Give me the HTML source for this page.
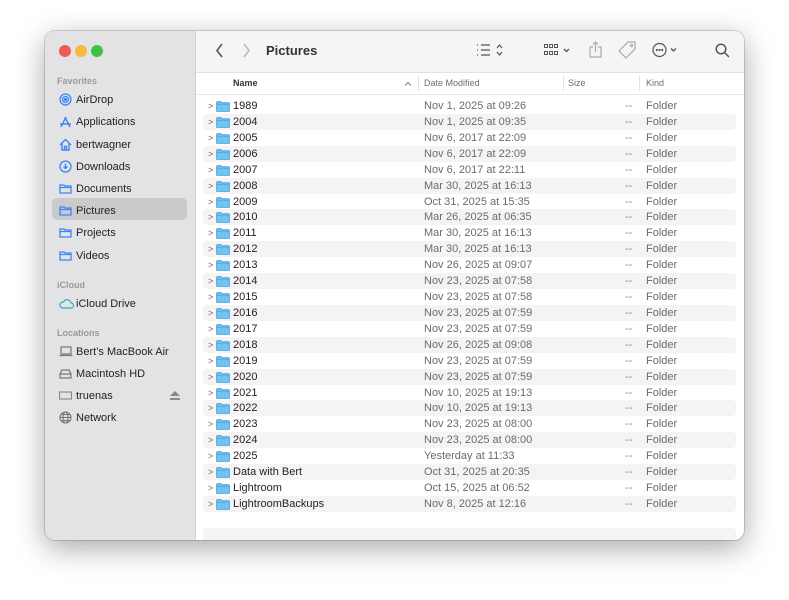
<!DOCTYPE html><html><head><style>
body{margin:0;width:789px;height:600px;background:#fff;font-family:"Liberation Sans",sans-serif;position:relative;overflow:hidden}
.win{position:absolute;left:45px;top:31px;width:699px;height:509px;border-radius:10px;background:#fff;box-shadow:0 8px 30px rgba(0,0,0,.35),0 0 0 1px rgba(0,0,0,.15);overflow:hidden}
.side{position:absolute;left:0;top:0;width:150px;height:509px;background:#e3e3e5;border-right:1px solid #d0d0d0}
.tl{position:absolute;top:14px;width:12px;height:12px;border-radius:50%}
.sec{position:absolute;left:12px;font-size:9px;color:#9a9a9c;font-weight:bold}
.it{position:absolute;left:31px;font-size:11px;color:#222;line-height:14px}
.ic{position:absolute;left:14px;width:13px;height:13px}
.sel{position:absolute;left:7px;top:167px;width:135px;height:22px;background:#cacacc;border-radius:5px}
.tb{position:absolute;left:151px;top:0;right:0;height:41px;background:#f5f5f6;border-bottom:1px solid #e2e2e2}
.hdr{position:absolute;left:151px;top:42px;right:0;height:21px;border-bottom:1px solid #e6e6e6;font-size:9px;color:#6e6e6e}
.hdr span{position:absolute;top:5px}
.sep{position:absolute;top:3px;width:1px;height:15px;background:#e2e2e2}
.row{position:absolute;left:158px;width:533px;height:16px;border-radius:4px;font-size:11px;color:#222}
.row.s{background:#f4f4f5}
.row .c{position:absolute;left:5px;top:3px;font-size:9px;color:#666}
.row .f{position:absolute;left:13px;top:3px;width:14px;height:11px}
.row .n{position:absolute;left:30px;top:2px}
.row .d{position:absolute;left:221px;top:2px;color:#6b6b6b}
.row .z{position:absolute;left:422px;top:2px;color:#8a8a8a}
.row .k{position:absolute;left:443px;top:2px;color:#6b6b6b}
</style></head><body>
<div class="win">
<div class="side">
<div class="tl" style="left:14px;background:#ee5b55"></div>
<div class="tl" style="left:30px;background:#f6bb3d"></div>
<div class="tl" style="left:46px;background:#3ec244"></div>
<div class="sec" style="top:45px">Favorites</div>
<div class="sel"></div>
<svg class="ic" style="top:62px" viewBox="0 0 13 13" fill="none" stroke="#3a87f5" stroke-width="1.3"><circle cx="6.5" cy="6.5" r="5.5"/><circle cx="6.5" cy="6.5" r="3"/><circle cx="6.5" cy="6.5" r="1" fill="#3a87f5"/></svg><div class="it" style="top:62px">AirDrop</div>
<svg class="ic" style="top:84px" viewBox="0 0 13 13" fill="none" stroke="#3a87f5" stroke-width="1.4"><path d="M2 12L7 2M11 12L6 2M1 9h11"/></svg><div class="it" style="top:84px">Applications</div>
<svg class="ic" style="top:107px" viewBox="0 0 13 13" fill="none" stroke="#3a87f5" stroke-width="1.4"><path d="M1 7L6.5 1.5 12 7M3 5.5V12h7V5.5M5.5 12V8.5h2V12"/></svg><div class="it" style="top:107px">bertwagner</div>
<svg class="ic" style="top:129px" viewBox="0 0 13 13" fill="none" stroke="#3a87f5" stroke-width="1.3"><circle cx="6.5" cy="6.5" r="5.5"/><path d="M6.5 3.5v5M4.5 6.5l2 2 2-2"/></svg><div class="it" style="top:129px">Downloads</div>
<svg class="ic" style="top:151px" viewBox="0 0 13 13" fill="none" stroke="#3a87f5" stroke-width="1.3"><path d="M1 3h4l1 1h6v7H1zM1 5.5h11"/></svg><div class="it" style="top:151px">Documents</div>
<svg class="ic" style="top:173px" viewBox="0 0 13 13" fill="none" stroke="#3a87f5" stroke-width="1.3"><path d="M1 3h4l1 1h6v7H1zM1 5.5h11"/></svg><div class="it" style="top:173px">Pictures</div>
<svg class="ic" style="top:195px" viewBox="0 0 13 13" fill="none" stroke="#3a87f5" stroke-width="1.3"><path d="M1 3h4l1 1h6v7H1zM1 5.5h11"/></svg><div class="it" style="top:195px">Projects</div>
<svg class="ic" style="top:218px" viewBox="0 0 13 13" fill="none" stroke="#3a87f5" stroke-width="1.3"><path d="M1 3h4l1 1h6v7H1zM1 5.5h11"/></svg><div class="it" style="top:218px">Videos</div>
<div class="sec" style="top:249px">iCloud</div>
<svg class="ic" style="top:266px;width:15px" viewBox="0 0 15 13" fill="none" stroke="#3aa9c9" stroke-width="1.2"><path d="M3.5 11h8.5a2.5 2.5 0 0 0 0-5 4 4 0 0 0-7.5-1A3 3 0 0 0 3.5 11z"/></svg><div class="it" style="top:266px">iCloud Drive</div>
<div class="sec" style="top:297px">Locations</div>
<svg class="ic" style="top:314px;width:14px" viewBox="0 0 14 13" fill="none" stroke="#777" stroke-width="1.2"><path d="M2 2h10v7H2zM0.5 10.5h13"/></svg><div class="it" style="top:314px">Bert’s MacBook Air</div>
<svg class="ic" style="top:336px" viewBox="0 0 13 13" fill="none" stroke="#777" stroke-width="1.2"><path d="M1 7l2-4h7l2 4v4H1zM1 7h11"/></svg><div class="it" style="top:336px">Macintosh HD</div>
<svg class="ic" style="top:358px" viewBox="0 0 13 13" fill="none" stroke="#888" stroke-width="1.1"><rect x="0.5" y="3" width="12" height="7"/></svg><div class="it" style="top:358px">truenas</div>
<svg style="position:absolute;left:125px;top:360px" width="10" height="9" viewBox="0 0 10 9"><path d="M5 0L10 5H0z M0 7h10v2H0z" fill="#888"/></svg>
<svg class="ic" style="top:380px" viewBox="0 0 13 13" fill="none" stroke="#777" stroke-width="1.1"><circle cx="6.5" cy="6.5" r="5.5"/><ellipse cx="6.5" cy="6.5" rx="2.5" ry="5.5"/><path d="M1 6.5h11M2 3.5h9M2 9.5h9"/></svg><div class="it" style="top:380px">Network</div>
</div>
<div class="tb">
<svg style="position:absolute;left:19px;top:12px" width="10" height="15"><path d="M7 1L2 7.5 7 14" fill="none" stroke="#555" stroke-width="1.6"/></svg>
<svg style="position:absolute;left:46px;top:12px" width="10" height="15"><path d="M2 1l5 6.5L2 14" fill="none" stroke="#bbb" stroke-width="1.6"/></svg>
<div style="position:absolute;left:70px;top:12px;font-size:13px;font-weight:bold;color:#333">Pictures</div>
<svg style="position:absolute;left:281px;top:12px" width="30" height="14" fill="none" stroke="#555" stroke-width="1.2"><path d="M0 2h1M0 7h1M0 12h1M4 2h9M4 7h9M4 12h9M20 5l2.5-3 2.5 3M20 9l2.5 3 2.5-3"/></svg>
<svg style="position:absolute;left:348px;top:13px" width="30" height="12" fill="none" stroke="#555" stroke-width="1"><rect x="0.5" y="0.5" width="3" height="3"/><rect x="5.5" y="0.5" width="3" height="3"/><rect x="10.5" y="0.5" width="3" height="3"/><rect x="0.5" y="7.5" width="3" height="3"/><rect x="5.5" y="7.5" width="3" height="3"/><rect x="10.5" y="7.5" width="3" height="3"/><path d="M20 5l2.5 2.5L25 5" stroke-width="1.3"/></svg>
<svg style="position:absolute;left:393px;top:10px" width="13" height="17" fill="none" stroke="#aaa" stroke-width="1.2"><path d="M4 6H1v10h11V6H9M6.5 11V1M4 3.5L6.5 1 9 3.5"/></svg>
<svg style="position:absolute;left:422px;top:10px" width="18" height="18" fill="none" stroke="#aaa" stroke-width="1.2"><path d="M10 1h7v7l-9 9-7-7z"/><circle cx="13.5" cy="4.5" r="1"/></svg>
<svg style="position:absolute;left:456px;top:11px" width="30" height="16" fill="none" stroke="#555" stroke-width="1.2"><circle cx="7.5" cy="8" r="6.5"/><circle cx="4.8" cy="8" r=".5" fill="#555"/><circle cx="7.5" cy="8" r=".5" fill="#555"/><circle cx="10.2" cy="8" r=".5" fill="#555"/><path d="M19 6.5l2.5 2.5L24 6.5" stroke-width="1.3"/></svg>
<svg style="position:absolute;left:519px;top:12px" width="15" height="15" fill="none" stroke="#555" stroke-width="1.5"><circle cx="6" cy="6" r="4.8"/><path d="M9.5 9.5L14 14"/></svg>
</div>
<div class="hdr">
<span style="left:37px;font-weight:bold;color:#333">Name</span>
<svg style="position:absolute;left:208px;top:8px" width="8" height="5"><path d="M1 4.5L4 1.5 7 4.5" fill="none" stroke="#888" stroke-width="1.1"/></svg>
<div class="sep" style="left:222px"></div><span style="left:228px">Date Modified</span>
<div class="sep" style="left:367px"></div><span style="left:372px">Size</span>
<div class="sep" style="left:443px"></div><span style="left:450px">Kind</span>
</div>
<div id="rows"></div>
<div style="position:absolute;left:158px;top:497px;width:533px;height:20px;background:#f4f4f5;border-radius:4px"></div>
</div>
<script>
var d=[["1989","Nov 1, 2025 at 09:26"],["2004","Nov 1, 2025 at 09:35"],["2005","Nov 6, 2017 at 22:09"],["2006","Nov 6, 2017 at 22:09"],["2007","Nov 6, 2017 at 22:11"],["2008","Mar 30, 2025 at 16:13"],["2009","Oct 31, 2025 at 15:35"],["2010","Mar 26, 2025 at 06:35"],["2011","Mar 30, 2025 at 16:13"],["2012","Mar 30, 2025 at 16:13"],["2013","Nov 26, 2025 at 09:07"],["2014","Nov 23, 2025 at 07:58"],["2015","Nov 23, 2025 at 07:58"],["2016","Nov 23, 2025 at 07:59"],["2017","Nov 23, 2025 at 07:59"],["2018","Nov 26, 2025 at 09:08"],["2019","Nov 23, 2025 at 07:59"],["2020","Nov 23, 2025 at 07:59"],["2021","Nov 10, 2025 at 19:13"],["2022","Nov 10, 2025 at 19:13"],["2023","Nov 23, 2025 at 08:00"],["2024","Nov 23, 2025 at 08:00"],["2025","Yesterday at 11:33"],["Data with Bert","Oct 31, 2025 at 20:35"],["Lightroom","Oct 15, 2025 at 06:52"],["LightroomBackups","Nov 8, 2025 at 12:16"]];
var h="";
var fo='<svg class="f" viewBox="0 0 14 11"><path d="M0.5 1.5Q0.5 0.5 1.5 0.5H5l1 1.2h6.5q1 0 1 1V10q0 .5-.5.5H1q-.5 0-.5-.5z" fill="#72c3f0" stroke="#4aa3da" stroke-width=".8"/><path d="M0.5 3.2h13" stroke="#4aa3da" stroke-width=".8"/></svg>';
d.forEach(function(r,i){var t=67+i*15.92;h+='<div class="row'+(i%2?' s':'')+'" style="top:'+t+'px"><span class="c">&gt;</span>'+fo+'<span class="n">'+r[0]+'</span><span class="d">'+r[1]+'</span><span class="z">--</span><span class="k">Folder</span></div>';});
document.getElementById("rows").innerHTML=h;
</script>
</body></html>
